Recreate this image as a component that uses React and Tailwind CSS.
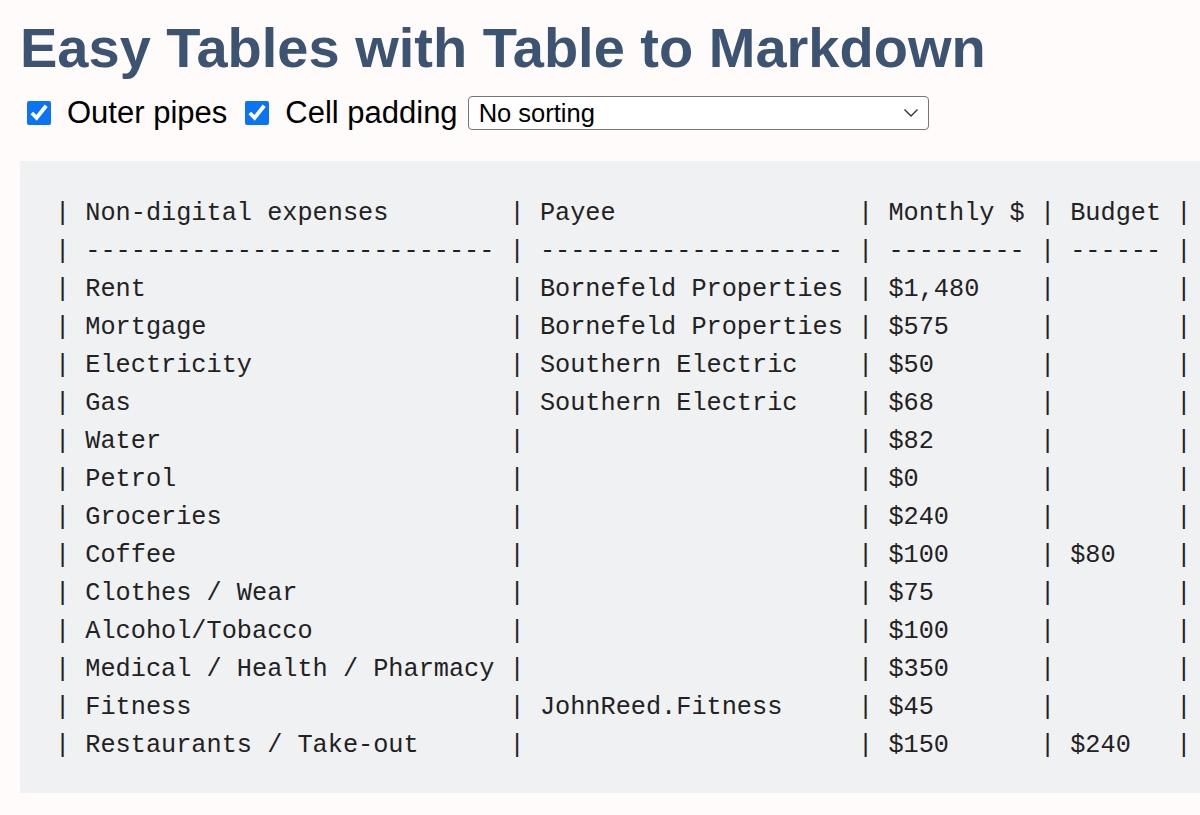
const headers = ['Non-digital expenses', 'Payee', 'Monthly $', 'Budget'];

const rows = [
  ['Rent', 'Bornefeld Properties', '$1,480', ''],
  ['Mortgage', 'Bornefeld Properties', '$575', ''],
  ['Electricity', 'Southern Electric', '$50', ''],
  ['Gas', 'Southern Electric', '$68', ''],
  ['Water', '', '$82', ''],
  ['Petrol', '', '$0', ''],
  ['Groceries', '', '$240', ''],
  ['Coffee', '', '$100', '$80'],
  ['Clothes / Wear', '', '$75', ''],
  ['Alcohol/Tobacco', '', '$100', ''],
  ['Medical / Health / Pharmacy', '', '$350', ''],
  ['Fitness', 'JohnReed.Fitness', '$45', ''],
  ['Restaurants / Take-out', '', '$150', '$240']
];

function toMarkdown() {
  const widths = headers.map((h, i) =>
    Math.max(h.length, ...rows.map((r) => r[i].length))
  );
  const line = (cells) =>
    '| ' + cells.map((c, i) => c.padEnd(widths[i], ' ')).join(' | ') + ' |';
  return [
    line(headers),
    line(widths.map((w) => '-'.repeat(w))),
    ...rows.map(line)
  ].join('\n');
}

function Check({ label }) {
  return (
    <label className="flex items-center gap-[16px]">
      <input
        type="checkbox"
        defaultChecked
        className="m-0 h-[24px] w-[24px] accent-[#0a74f5]"
      />
      <span>{label}</span>
    </label>
  );
}

export default function App() {
  return (
    <div className="min-h-[815px] w-full overflow-hidden bg-[#fffbfa] pl-[20px] font-['Liberation_Sans',Arial,sans-serif]">
      <h1 className="mt-[20px] text-[56px] font-bold leading-none text-[#3c5372]">
        Easy Tables with Table to Markdown
      </h1>

      <div className="mt-[20px] flex h-[34px] items-center pl-[7px] text-[31px] text-black">
        <Check label="Outer pipes" />
        <div className="w-[18px]" />
        <Check label="Cell padding" />
        <div className="ml-[10px] flex h-[34px] w-[461px] items-center justify-between rounded-[4px] border-[1.5px] border-[#767676] bg-white pl-[10px] pr-[9px] text-[25.5px]">
          <span>No sorting</span>
          <svg width="16" height="10" viewBox="0 0 16 10" fill="none">
            <path d="M1.5 1.5 L8 8 L14.5 1.5" stroke="#333" strokeWidth="1.4" />
          </svg>
        </div>
      </div>

      <pre className="mt-[31px] bg-[#f0f1f3] pb-[28px] pl-[35px] pt-[34px] font-['Liberation_Mono','Courier_New',monospace] text-[25.25px] leading-[38px] text-[#222]">
        {toMarkdown()}
      </pre>
    </div>
  );
}
